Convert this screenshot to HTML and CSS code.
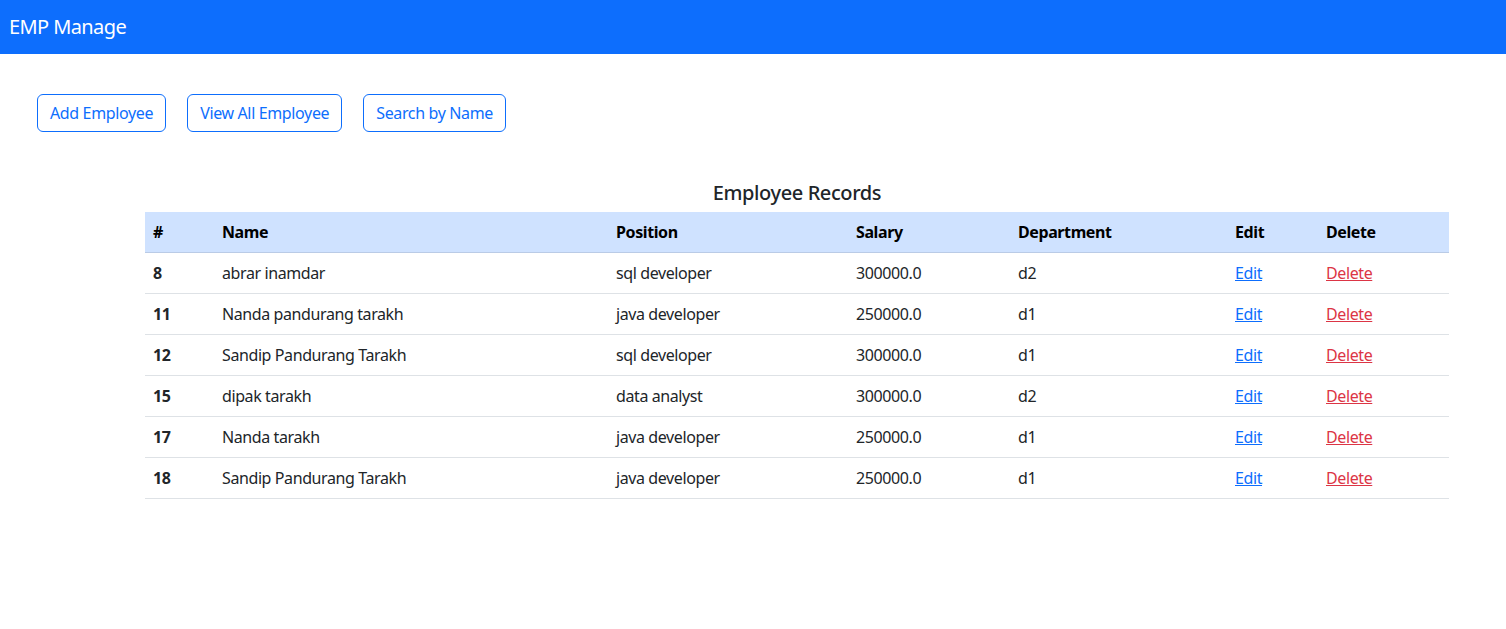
FILE: index.html
```html
<!DOCTYPE html>
<html lang="en">
<head>
<meta charset="utf-8">
<title>EMP Manage</title>
<link rel="stylesheet" href="styles.css">
</head>
<body>
<nav class="navbar">
  <span class="brand">EMP Manage</span>
</nav>
<div class="actions">
  <a class="btn" href="#">Add Employee</a>
  <a class="btn" href="#">View All Employee</a>
  <a class="btn" href="#">Search by Name</a>
</div>
<section class="records">
  <h5 class="title">Employee Records</h5>
  <table class="table">
    <colgroup>
      <col class="c-id"><col class="c-name"><col class="c-pos"><col class="c-sal"><col class="c-dep"><col class="c-edit"><col class="c-del">
    </colgroup>
    <thead>
      <tr><th>#</th><th>Name</th><th>Position</th><th>Salary</th><th>Department</th><th>Edit</th><th>Delete</th></tr>
    </thead>
    <tbody>
      <tr><th>8</th><td>abrar inamdar</td><td>sql developer</td><td>300000.0</td><td>d2</td><td><a class="edit" href="#">Edit</a></td><td><a class="del" href="#">Delete</a></td></tr>
      <tr><th>11</th><td>Nanda pandurang tarakh</td><td>java developer</td><td>250000.0</td><td>d1</td><td><a class="edit" href="#">Edit</a></td><td><a class="del" href="#">Delete</a></td></tr>
      <tr><th>12</th><td>Sandip Pandurang Tarakh</td><td>sql developer</td><td>300000.0</td><td>d1</td><td><a class="edit" href="#">Edit</a></td><td><a class="del" href="#">Delete</a></td></tr>
      <tr><th>15</th><td>dipak tarakh</td><td>data analyst</td><td>300000.0</td><td>d2</td><td><a class="edit" href="#">Edit</a></td><td><a class="del" href="#">Delete</a></td></tr>
      <tr><th>17</th><td>Nanda tarakh</td><td>java developer</td><td>250000.0</td><td>d1</td><td><a class="edit" href="#">Edit</a></td><td><a class="del" href="#">Delete</a></td></tr>
      <tr><th>18</th><td>Sandip Pandurang Tarakh</td><td>java developer</td><td>250000.0</td><td>d1</td><td><a class="edit" href="#">Edit</a></td><td><a class="del" href="#">Delete</a></td></tr>
    </tbody>
  </table>
</section>
</body>
</html>
```
FILE: styles.css
```css
* { box-sizing: border-box; }
body {
  margin: 0;
  font-family: "Segoe UI", "Noto Sans", "Open Sans", sans-serif;
  font-size: 16px;
  line-height: 1.5;
  letter-spacing: -0.025em;
  color: #212529;
  background: #fff;
}
.navbar {
  height: 54px;
  background: #0d6efd;
  display: flex;
  align-items: center;
  padding: 0 9px;
}
.brand {
  color: #fff;
  font-size: 20px;
  line-height: 30px;
  letter-spacing: -0.03em;
}
.actions {
  display: flex;
  gap: 21px;
  padding: 40px 37px 0;
}
.btn {
  display: inline-block;
  height: 38px;
  padding: 6px 12px;
  border: 1px solid #0d6efd;
  border-radius: 6px;
  color: #0d6efd;
  text-decoration: none;
  font-size: 16px;
  line-height: 24px;
  letter-spacing: -0.36px;
}
.records {
  padding: 49px 57px 0 145px;
}
.title {
  margin: 0 0 7px;
  text-align: center;
  font-size: 20px;
  font-weight: 500;
  line-height: 24px;
  color: #212529;
}
.table {
  width: 100%;
  border-collapse: collapse;
  table-layout: fixed;
}
.c-id { width: 69px; }
.c-name { width: 394px; }
.c-pos { width: 240px; }
.c-sal { width: 162px; }
.c-dep { width: 217px; }
.c-edit { width: 91px; }
.table th, .table td {
  padding: 8px;
  text-align: left;
  border-bottom: 1px solid #dee2e6;
  line-height: 24px;
  white-space: nowrap;
}
.table th { font-weight: 700; }
.table thead th {
  background: #cfe2ff;
  color: #000;
  border-bottom-color: #bacbe6;
}
.edit { color: #0d6efd; }
.del { color: #dc3545; }
```
